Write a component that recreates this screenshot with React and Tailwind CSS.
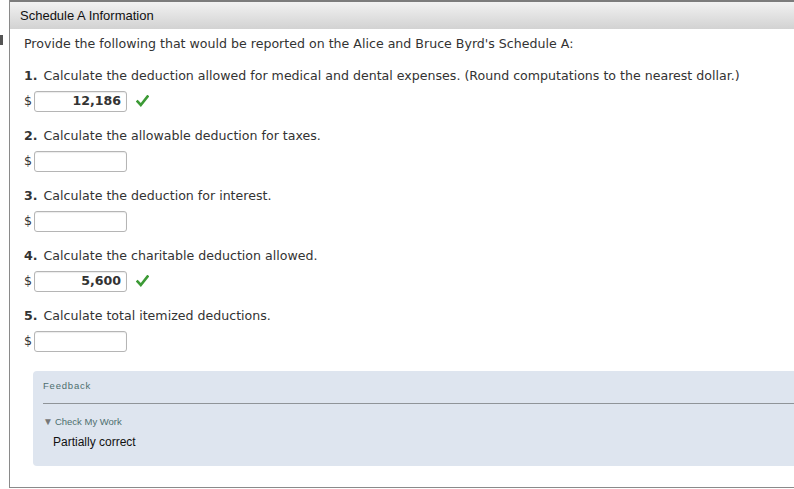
import React from "react";

function Check() {
  return (
    <svg width="13" height="12" viewBox="0 0 13 12" className="ml-[9px]">
      <path d="M1.5 6.5 L4.8 10 L11.5 1.5" fill="none" stroke="#3c9a35" strokeWidth="2.6" strokeLinecap="square" />
    </svg>
  );
}

function Question({ n, text, value, correct }) {
  return (
    <div className="flex flex-col">
      <div className="h-[20px] flex items-center text-[12.6px] text-[#333]">
        <span className="font-bold">{n}.</span>
        <span className="ml-[6px]">{text}</span>
      </div>
      <div className="flex items-center h-[22px] mt-[4px]">
        <span className="text-[12.6px] text-[#333] w-[10px]">$</span>
        <div className="w-[93px] h-[21px] border border-[#b5b5b5] rounded-[3px] bg-white flex items-center justify-end pr-[5px] text-[12.6px] font-bold text-[#333] shadow-[inset_0_1px_1px_rgba(0,0,0,0.08)]">
          {value}
        </div>
        {correct && <Check />}
      </div>
    </div>
  );
}

export default function App() {
  const qs = [
    { n: 1, text: "Calculate the deduction allowed for medical and dental expenses. (Round computations to the nearest dollar.)", value: "12,186", correct: true },
    { n: 2, text: "Calculate the allowable deduction for taxes.", value: "" },
    { n: 3, text: "Calculate the deduction for interest.", value: "" },
    { n: 4, text: "Calculate the charitable deduction allowed.", value: "5,600", correct: true },
    { n: 5, text: "Calculate total itemized deductions.", value: "" },
  ];
  return (
    <div className="w-[794px] h-[489px] bg-white relative overflow-hidden" style={{ fontFamily: '"DejaVu Sans", Verdana, sans-serif' }}>
      <div className="absolute left-0 top-[35px] w-[3px] h-[10px] bg-[#555]" />
      <div className="ml-[9px] h-[488px] border-l border-b border-[#8a8a8a] flex flex-col">
        <div className="h-[29px] shrink-0 border-t-2 border-[#7c7c7c] bg-gradient-to-b from-[#f2f2f2] to-[#d2d2d2] flex items-center pl-[10px] text-[13px] text-[#111]" style={{ fontFamily: '"Liberation Sans", Arial, sans-serif' }}>
          Schedule A Information
        </div>
        <div className="pl-[14px] mt-[5px] text-[12.6px] text-[#333] h-[20px] shrink-0 flex items-center">
          Provide the following that would be reported on the Alice and Bruce Byrd's Schedule A:
        </div>
        <div className="pl-[14px] mt-[12px] flex flex-col gap-[14px]">
          {qs.map((q) => (
            <Question key={q.n} {...q} />
          ))}
        </div>
        <div className="ml-[23px] mt-[19px] h-[95px] shrink-0 bg-[#dee5ef] rounded-l-[4px] pl-[10px] pt-[9px]" style={{ fontFamily: '"Liberation Sans", Arial, sans-serif' }}>
          <div className="text-[9.5px] tracking-[0.8px] text-[#4d6e6e] h-[12px] leading-[12px]">Feedback</div>
          <div className="h-[1px] bg-[#8f9498] mt-[11px]" />
          <div className="mt-[12px] text-[9.5px] text-[#4d6e6e] flex items-center h-[12px] leading-[12px]">
            <span className="text-[10px] text-[#777] mr-[2px]">▼</span>Check My Work
          </div>
          <div className="mt-[7px] ml-[10px] text-[12px] text-[#111] h-[14px] leading-[14px]">Partially correct</div>
        </div>
      </div>
    </div>
  );
}
